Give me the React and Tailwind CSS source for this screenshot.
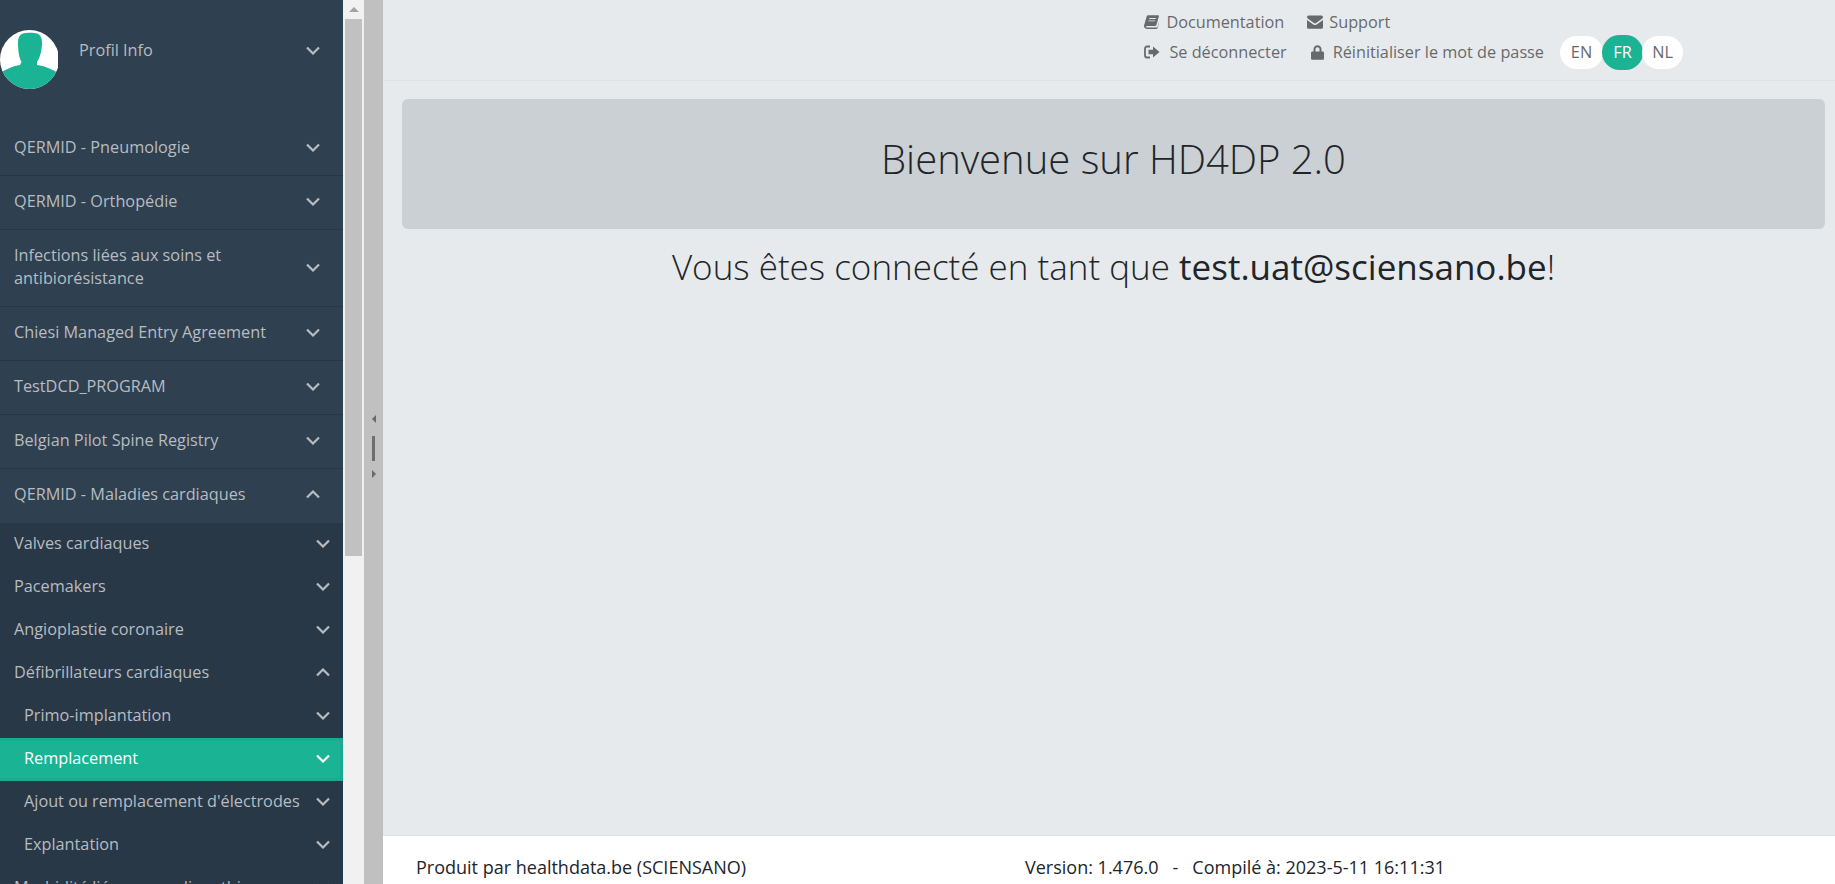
const font = { fontFamily: '"Open Sans", sans-serif' };

function Chevron({ up, className = "" }) {
    return (
        <svg width="14" height="9" viewBox="0 0 14 9" fill="none" className={className}>
            <polyline
                points={up ? "1,7.5 7,1.5 13,7.5" : "1,1.5 7,7.5 13,1.5"}
                stroke="currentColor"
                strokeWidth="2.2"
            />
        </svg>
    );
}

function BookIcon() {
    return (
        <svg width="15" height="14" viewBox="0 0 15 14" className="shrink-0">
            <path
                fill="currentColor"
                d="M4 0.3h10.200c.6 0 .9.400.7 1l-2.500 8.700c-.2.600-.6.900-1.200.9H3.400c-.9 0-1.300.400-1.300.8 0 .5.400.9 1.200.9h9.500c.4 0 .7-.2.800-.5l2-6.500c.1.400.1.800 0 1.100l-2 6.300c-.2.600-.7 1-1.300 1H2.700C1.200 13.700 0 12.600 0 11.100c0-.3 0-.6.100-.9l2.500-8.500C2.800.9 3.300.3 4 .3zM5.400 3l-.3.900h6.500l.3-.9zM4.600 5.400l-.3.900h6.500l.3-.9z"
            />
        </svg>
    );
}

function EnvelopeIcon() {
    return (
        <svg width="16" height="14" viewBox="0 0 16 14" className="shrink-0">
            <path
                fill="currentColor"
                d="M1.500 0.500h13a1.500 1.500 0 0 1 1.500 1.500c0 .7-.4 1.300-1 1.700L9.100 8c-.8.500-1.400.500-2.200 0L1 3.700C.4 3.300 0 2.700 0 2a1.500 1.500 0 0 1 1.500-1.500z"
            />
            <path
                fill="currentColor"
                d="M0 5v7.300A1.500 1.500 0 0 0 1.500 13.800h13a1.500 1.500 0 0 0 1.500-1.500V5L9.700 9.500c-1.100.7-2.300.7-3.400 0z"
            />
        </svg>
    );
}

function SignOutIcon() {
    return (
        <svg width="16" height="14" viewBox="0 0 16 14" className="shrink-0">
            <path d="M6 1.500H3A2 2 0 0 0 1 3.500v7a2 2 0 0 0 2 2h3" fill="none" stroke="currentColor" strokeWidth="1.800" />
            <path fill="currentColor" d="M9 1.500L15.500 7L9 12.500V9.300H4.500V4.700H9z" />
        </svg>
    );
}

function LockIcon() {
    return (
        <svg width="13" height="15" viewBox="0 0 13 15" className="shrink-0">
            <path
                fill="currentColor"
                d="M6.500 0.300c2.300 0 4 1.700 4 4v2.200h1.200c.7 0 1.300.6 1.300 1.300v5.700c0 .7-.6 1.300-1.300 1.300H1.300C.6 14.800 0 14.200 0 13.500V7.800c0-.7.6-1.300 1.300-1.300h1.200V4.300c0-2.300 1.700-4 4-4zm0 2c-1.200 0-2 .8-2 2v2.200h4V4.300c0-1.200-.8-2-2-2z"
            />
        </svg>
    );
}

function Avatar() {
    return (
        <svg width="58" height="59" viewBox="0 0 58 59" className="shrink-0">
            <defs>
                <clipPath id="avatarClip">
                    <circle cx="29.500" cy="29.500" r="29.500" />
                </clipPath>
            </defs>
            <g clipPath="url(#avatarClip)">
                <rect width="60" height="60" fill="#ffffff" />
                <path
                    fill="#1ab394"
                    d="M23 3.500C27 2.500 34 2.500 37 3.500C40.500 4.500 42 8 42 13C42 20 40 28 37 32L37 35C45 36 52 39 58 43V60H0V43C6 39 13 36 20 35L21.500 32C19 28 18 20 18 13C18 8 19.500 4.500 23 3.500z"
                />
            </g>
        </svg>
    );
}

function TopRow({ label, up }) {
    return (
        <div className={"flex h-[54px] items-center justify-between pl-[14px] pr-[23px] pb-[3px] border-b " + (up ? "border-transparent" : "border-[#283746]")}>
            <span>{label}</span>
            <Chevron up={up} />
        </div>
    );
}

function SubRow({ label, up, nested, active }) {
    return (
        <div className={"flex h-[43px] items-center justify-between " + (nested ? "pl-[24px] " : "pl-[14px] ") + (active ? "bg-[#1ab394] text-white border-y-[3px] border-r-[3px] border-[#18ab8e] pr-[10px] pb-[2px]" : "pr-[13px] pb-[2px]")}>
            <span>{label}</span>
            <Chevron up={up} />
        </div>
    );
}

function Sidebar() {
    return (
        <div className="w-[343px] shrink-0 h-full overflow-hidden bg-[#2f4050] text-[16.25px] text-[#b7bcc1]">
            <div className="h-[122px]">
                <div className="flex items-start justify-between pt-[30px] pr-[23px]">
                    <div className="flex">
                        <Avatar />
                        <span className="ml-[21px] mt-[8px]">Profil Info</span>
                    </div>
                    <div className="mt-[16px]"><Chevron /></div>
                </div>
            </div>
            <TopRow label="QERMID - Pneumologie" />
            <TopRow label="QERMID - Orthopédie" />
            <div className="flex h-[77px] items-center justify-between pl-[14px] pr-[23px] pb-[2px] border-b border-[#283746] leading-[23px]">
                <span className="w-[240px]">Infections liées aux soins et antibiorésistance</span>
                <Chevron />
            </div>
            <TopRow label="Chiesi Managed Entry Agreement" />
            <TopRow label="TestDCD_PROGRAM" />
            <TopRow label="Belgian Pilot Spine Registry" />
            <TopRow label="QERMID - Maladies cardiaques" up />
            <div className="bg-[#293846]">
                <SubRow label="Valves cardiaques" />
                <SubRow label="Pacemakers" />
                <SubRow label="Angioplastie coronaire" />
                <SubRow label="Défibrillateurs cardiaques" up />
                <SubRow label="Primo-implantation" nested />
                <SubRow label="Remplacement" nested active />
                <SubRow label="Ajout ou remplacement d'électrodes" nested />
                <SubRow label="Explantation" nested />
                <SubRow label="Morbidité liée aux cardiopathies" />
            </div>
        </div>
    );
}

function Scrollbar() {
    return (
        <div className="w-[21px] shrink-0 h-full bg-[#f1f1f1] flex flex-col items-center">
            <div className="h-[19px] shrink-0 flex items-center justify-center">
                <div className="w-0 h-0 border-x-[5px] border-x-transparent border-b-[5px] border-b-[#a3a3a3]"></div>
            </div>
            <div className="w-[17px] h-[537px] bg-[#c1c1c1]"></div>
        </div>
    );
}

function Splitter() {
    return (
        <div className="w-[19px] shrink-0 h-full bg-[#c0c0c0] flex flex-col items-center pt-[415px]">
            <div className="w-0 h-0 border-y-[4px] border-y-transparent border-r-[4px] border-r-[#676a6c]"></div>
            <div className="w-[3px] h-[25px] bg-[#6e6e6e] mt-[13px]"></div>
            <div className="w-0 h-0 border-y-[4px] border-y-transparent border-l-[4px] border-l-[#676a6c] mt-[9px]"></div>
        </div>
    );
}

function Header() {
    return (
        <div className="h-[81px] shrink-0 border-b border-[#dfe3e6] flex justify-end pr-[152px] text-[16.25px] text-[#676a6c]">
            <div className="flex flex-col pt-[10px]">
                <div className="flex items-center h-[24px]">
                    <BookIcon />
                    <span className="ml-[7px]">Documentation</span>
                    <span className="ml-[23px]"><EnvelopeIcon /></span>
                    <span className="ml-[6px]">Support</span>
                </div>
                <div className="flex items-center h-[28px] mt-[4px]">
                    <SignOutIcon />
                    <span className="ml-[9px]">Se déconnecter</span>
                    <span className="ml-[24px]"><LockIcon /></span>
                    <span className="ml-[9px]">Réinitialiser le mot de passe</span>
                    <div className="flex items-center ml-[16px]">
                        <span className="flex h-[33px] w-[43px] items-center justify-center rounded-full bg-white">EN</span>
                        <span className="flex h-[35px] w-[41px] -ml-px items-center justify-center rounded-full bg-[#1ab394] text-white">FR</span>
                        <span className="flex h-[33px] w-[41px] -ml-px items-center justify-center rounded-full bg-white">NL</span>
                    </div>
                </div>
            </div>
        </div>
    );
}

export default function App() {
    return (
        <div style={font} className="flex h-screen w-full overflow-hidden bg-[#e7eaec]">
            <Sidebar />
            <Scrollbar />
            <Splitter />
            <div className="flex-1 min-w-0 flex flex-col h-full">
                <Header />
                <div className="flex-1 min-h-0 pt-[18px] pl-[19px] pr-[10px]">
                    <div className="h-[130px] rounded-[6px] bg-[#cbd0d4] flex items-center justify-center pb-[11px] text-[40px] font-light text-[#212529]">
                        Bienvenue sur HD4DP 2.0
                    </div>
                    <div className="mt-[12px] text-center text-[35px] font-light text-[#212529]">
                        Vous êtes connecté en tant que <span className="font-normal">test.uat@sciensano.be</span>!
                    </div>
                </div>
                <div className="h-[49px] shrink-0 bg-white border-t border-[#dee2e6] flex items-center text-[18px] text-[#212529] pl-[33px] pt-[15px]">
                    <span className="w-[609px]">Produit par healthdata.be (SCIENSANO)</span>
                    <span>Version: 1.476.0 &nbsp;&nbsp;-&nbsp;&nbsp; Compilé à: 2023-5-11 16:11:31</span>
                </div>
            </div>
        </div>
    );
}
